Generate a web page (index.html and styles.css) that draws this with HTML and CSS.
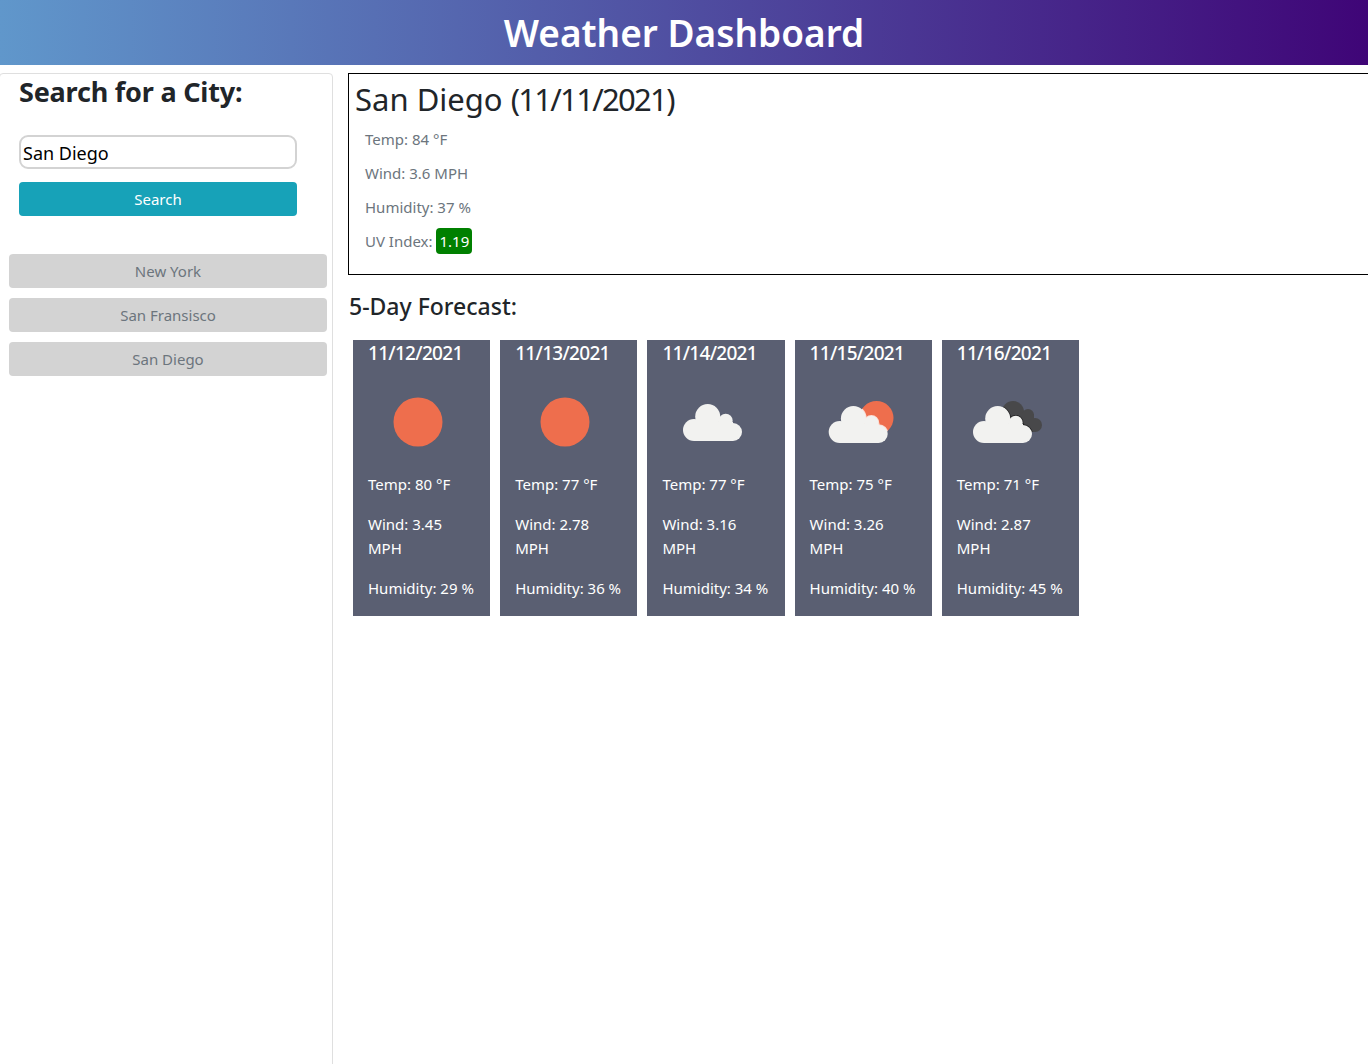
FILE: index.html
```html
<!DOCTYPE html>
<html lang="en">
<head>
    <meta charset="UTF-8">
    <meta name="viewport" content="width=device-width, initial-scale=1.0">
    <title>Weather Dashboard</title>
    <link rel="stylesheet" href="styles.css">
</head>
<body>

    <header class="page-header">
        <h1>Weather Dashboard</h1>
    </header>

    <svg class="icon-defs" width="0" height="0">
        <defs>
            <g id="cloud-shape">
                <circle cx="32" cy="58" r="11"/>
                <circle cx="71" cy="60" r="9"/>
                <circle cx="45.7" cy="44.5" r="12.5"/>
                <circle cx="63.7" cy="48.7" r="7"/>
                <rect x="32" y="50" width="39" height="19"/>
            </g>
            <clipPath id="sun-clip">
                <circle cx="66.5" cy="46" r="17"/>
            </clipPath>
            <clipPath id="dark-clip">
                <circle cx="56" cy="40" r="11"/>
                <circle cx="71" cy="43" r="6"/>
                <circle cx="78" cy="53" r="7"/>
                <rect x="55" y="42" width="22" height="18"/>
            </clipPath>
        </defs>
    </svg>

    <div class="content-row">
        <aside class="sidebar">
            <h3>Search for a City:</h3>
            <input class="city-input" type="text" value="San Diego">
            <button class="search-btn">Search</button>
            <div class="history">
                <button class="history-btn">New York</button>
                <button class="history-btn">San Fransisco</button>
                <button class="history-btn">San Diego</button>
            </div>
        </aside>

        <main class="main-col">
            <section class="current">
                <h2>San Diego <span class="current-date">(11/11/2021)</span></h2>
                <p>Temp: 84 °F</p>
                <p>Wind: 3.6 MPH</p>
                <p>Humidity: 37 %</p>
                <p class="uv-row">UV Index: <span class="uv-badge">1.19</span></p>
            </section>

            <h4 class="forecast-title">5-Day Forecast:</h4>

            <div class="forecast">
                <div class="day-card">
                    <h5>11/12/2021</h5>
                    <svg class="day-icon" viewBox="0 0 100 100"><circle cx="50" cy="50" r="24.5" fill="#ee6e4d"/></svg>
                    <p>Temp: 80 °F</p>
                    <p>Wind: 3.45<br>MPH</p>
                    <p>Humidity: 29 %</p>
                </div>
                <div class="day-card">
                    <h5>11/13/2021</h5>
                    <svg class="day-icon" viewBox="0 0 100 100"><circle cx="50" cy="50" r="24.5" fill="#ee6e4d"/></svg>
                    <p>Temp: 77 °F</p>
                    <p>Wind: 2.78<br>MPH</p>
                    <p>Humidity: 36 %</p>
                </div>
                <div class="day-card">
                    <h5>11/14/2021</h5>
                    <svg class="day-icon" viewBox="0 0 100 100"><use href="#cloud-shape" fill="#f2f2f0"/></svg>
                    <p>Temp: 77 °F</p>
                    <p>Wind: 3.16<br>MPH</p>
                    <p>Humidity: 34 %</p>
                </div>
                <div class="day-card">
                    <h5>11/15/2021</h5>
                    <svg class="day-icon" viewBox="0 0 100 100">
                        <circle cx="66.5" cy="46" r="17" fill="#ee6e4d"/>
                        <g clip-path="url(#sun-clip)">
                            <use href="#cloud-shape" transform="translate(-2.3 2)" fill="#fbd9cf" stroke="#fbd9cf" stroke-width="1.6"/>
                        </g>
                        <use href="#cloud-shape" transform="translate(-2.3 2)" fill="#f2f2f0"/>
                    </svg>
                    <p>Temp: 75 °F</p>
                    <p>Wind: 3.26<br>MPH</p>
                    <p>Humidity: 40 %</p>
                </div>
                <div class="day-card">
                    <h5>11/16/2021</h5>
                    <svg class="day-icon" viewBox="0 0 100 100">
                        <g fill="#48484a">
                            <circle cx="56" cy="40" r="11"/>
                            <circle cx="71" cy="43" r="6"/>
                            <circle cx="78" cy="53" r="7"/>
                            <rect x="55" y="42" width="22" height="18"/>
                        </g>
                        <g clip-path="url(#dark-clip)">
                            <use href="#cloud-shape" transform="translate(-5 2)" fill="#1f1f20" stroke="#1f1f20" stroke-width="1.4"/>
                        </g>
                        <use href="#cloud-shape" transform="translate(-5 2)" fill="#f2f2f0"/>
                    </svg>
                    <p>Temp: 71 °F</p>
                    <p>Wind: 2.87<br>MPH</p>
                    <p>Humidity: 45 %</p>
                </div>
            </div>
        </main>
    </div>

</body>
</html>
```

FILE: styles.css
```css
* {
    box-sizing: border-box;
}

html, body {
    height: 100%;
    overflow: hidden;
}

body {
    margin: 0;
    font-family: "Noto Sans", "Open Sans", sans-serif;
    font-size: 16px;
    line-height: 24px;
    color: #212529;
    background-color: white;
}

.icon-defs {
    display: block;
}

.page-header {
    height: 65px;
    background: linear-gradient(to right, #6097cb, #3f0577);
    color: white;
    text-align: center;
}

.page-header h1 {
    margin: 0;
    font-size: 37px;
    font-weight: 600;
    line-height: 65px;
}

.content-row {
    display: flex;
    margin-top: 8px;
}

.sidebar {
    flex: 0 0 334px;
    margin-left: -1px;
    min-height: 1000px;
    padding: 0 5px 0 9px;
    border: 1px solid #dfdfdf;
    border-radius: 4px;
}

.sidebar h3 {
    margin: 0 0 25px 10px;
    font-size: 27px;
    font-weight: 700;
    line-height: 36px;
    letter-spacing: -0.2px;
}

.city-input {
    display: block;
    width: 278px;
    height: 34px;
    margin-left: 10px;
    padding: 2px 2px 0;
    border: 2px solid #d3d3d3;
    border-radius: 9px;
    font-family: inherit;
    font-size: 18px;
    color: black;
}

.search-btn {
    display: block;
    width: 278px;
    height: 34px;
    margin: 13px 0 0 10px;
    border: none;
    border-radius: 4px;
    background-color: #17a2b8;
    color: white;
    font-family: inherit;
    font-size: 15px;
}

.history {
    display: flex;
    flex-direction: column;
    gap: 10px;
    margin-top: 38px;
}

.history-btn {
    height: 34px;
    border: none;
    border-radius: 4px;
    background-color: #d3d3d3;
    color: #6c757d;
    font-family: inherit;
    font-size: 15px;
}

.main-col {
    flex: 0 0 1040px;
    margin-left: 15px;
}

.current {
    height: 202px;
    padding: 5px 6px;
    border: 1px solid black;
}

.current h2 {
    margin: 0 0 8px 0;
    font-size: 31px;
    font-weight: 400;
    line-height: 40px;
}

.current-date {
    letter-spacing: -1.7px;
}

.current p {
    margin: 0 0 10px 10px;
    color: #6c757d;
    font-size: 15px;
}

.current .uv-row {
    margin-top: -1px;
}

.uv-badge {
    display: inline-block;
    height: 26px;
    padding: 0 3px;
    border-radius: 4px;
    background-color: green;
    color: white;
    line-height: 26px;
}

.forecast-title {
    margin: 15px 0 18px 1px;
    font-size: 23px;
    font-weight: 500;
    line-height: 32px;
}

.forecast {
    display: grid;
    grid-template-columns: repeat(5, 137.2px);
    gap: 10px;
    margin-left: 5px;
}

.day-card {
    height: 276px;
    padding: 0 15px;
    background-color: #5a5f72;
    color: white;
    font-size: 15px;
}

.day-card h5 {
    margin: 0;
    font-size: 19px;
    font-weight: 500;
    line-height: 26px;
    letter-spacing: -0.7px;
}

.day-icon {
    display: block;
    width: 100px;
    height: 100px;
    margin-top: 6px;
}

.day-card p {
    margin: 0 0 16px 0;
    white-space: nowrap;
}
```
